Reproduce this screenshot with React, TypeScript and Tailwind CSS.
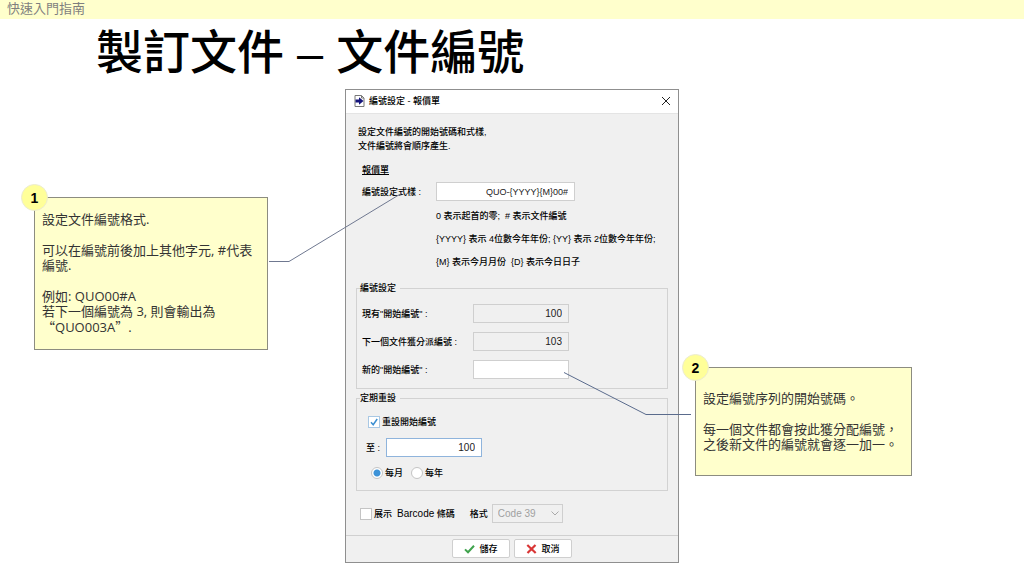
import { ReactNode } from "react";

const fieldStyle = "h-[19px] border px-1.5 text-right text-[#222] outline-none";

function Callout({
  number,
  className,
  children,
}: {
  number: number;
  className: string;
  children: ReactNode;
}) {
  return (
    <aside
      className={`relative w-full self-start border border-[#8c8c80] bg-[#ffffcc] pl-[7px] font-['Open_Sans','Noto_Sans_CJK_TC',sans-serif] text-[13px] leading-[15px] text-[#333] ${className}`}
    >
      <span className="absolute -top-3.5 -left-3.5 flex size-[27px] items-center justify-center rounded-full border border-[#ececd0] bg-[#ffff99] font-['Liberation_Sans',sans-serif] text-sm font-bold text-black">
        {number}
      </span>
      <div className="flex flex-col gap-4 whitespace-nowrap">{children}</div>
    </aside>
  );
}

function CheckBox({ id, checked }: { id: string; checked?: boolean }) {
  return (
    <span className="grid size-3 shrink-0 place-items-center">
      <input
        id={id}
        type="checkbox"
        defaultChecked={checked}
        className="peer col-start-1 row-start-1 size-3 appearance-none border border-[#c4c4c4] bg-white checked:border-[#a9c8e4]"
      />
      <svg
        viewBox="0 0 12 12"
        className="pointer-events-none invisible col-start-1 row-start-1 size-3 peer-checked:visible"
      >
        <path d="M3 6.2 5.2 8.8 9.2 3" fill="none" stroke="#3d8fd1" strokeWidth="1.5" />
      </svg>
    </span>
  );
}

function Radio({ label, checked }: { label: string; checked?: boolean }) {
  return (
    <label className="flex items-center gap-0.5">
      <input
        type="radio"
        name="periodo"
        defaultChecked={checked}
        className="size-3 appearance-none rounded-full border border-[#c4c4c4] bg-white checked:bg-[radial-gradient(circle,#3d93d8_0,#3d93d8_3px,#fff_4px)]"
      />
      {label}
    </label>
  );
}

function NumberRow({
  id,
  label,
  value,
  readOnly,
}: {
  id: string;
  label: string;
  value: string;
  readOnly?: boolean;
}) {
  return (
    <div className="flex items-center">
      <label htmlFor={id} className="w-[111px]">
        {label}
      </label>
      <input
        id={id}
        type="text"
        defaultValue={value}
        readOnly={readOnly}
        className={`${fieldStyle} w-24 border-[#cfcfcf] text-[10px] ${readOnly ? "bg-[#f0f0f0]" : "bg-white"}`}
      />
    </div>
  );
}

function NumberingDialog() {
  return (
    <section className="border border-[#8f8f8f] bg-[#f0f0f0] font-['Liberation_Sans','Noto_Sans_CJK_TC',sans-serif] text-[9px] leading-[14px] font-medium whitespace-nowrap text-black">
      <header className="flex h-[23px] items-center bg-white pr-[7px] pb-0.5 pl-2">
        <svg viewBox="0 0 11 12" className="h-3 w-[11px]">
          <path d="M1 .5h6.5L10 3v8.5H1z" fill="#fff" stroke="#777" />
          <path d="M7.5.5V3H10" fill="none" stroke="#777" />
          <path d="M1.5 4.5h3.5V2.2L9.5 6 5 9.8V7.5H1.5z" fill="#15157c" />
        </svg>
        <h2 className="ml-1 flex-1">編號設定 - 報價單</h2>
        <button type="button" aria-label="關閉">
          <svg viewBox="0 0 10 10" className="size-2.5">
            <path d="M1 1 9 9M9 1 1 9" stroke="#222" />
          </svg>
        </button>
      </header>

      <form className="border-t border-[#e4e4e4] px-2.5 pt-[11px] pb-3">
        <p className="pl-0.5">
          設定文件編號的開始號碼和式樣,
          <br />
          文件編號將會順序產生.
        </p>
        <h3 className="mt-2.5 pl-1.5 underline">報價單</h3>

        <div className="mt-[5px] flex items-center pl-1.5">
          <label htmlFor="formato" className="w-[74px]">
            編號設定式樣 :
          </label>
          <input
            id="formato"
            type="text"
            defaultValue="QUO-{YYYY}{M}00#"
            className={`${fieldStyle} w-[139px] border-[#cfcfcf] bg-white text-[9px]`}
          />
        </div>
        <div className="mt-2 flex flex-col gap-[9px] pl-20">
          <p>0 表示起首的零; &nbsp;# 表示文件編號</p>
          <p>{"{YYYY} 表示 4位數今年年份; {YY} 表示 2位數今年年份;"}</p>
          <p>
            {"{M} 表示今月月份"} &nbsp;{"{D} 表示今日日子"}
          </p>
        </div>

        <fieldset className="mt-3 border border-[#d2d2d2] px-[5px] pb-[9px]">
          <legend className="-ml-0.5 pr-1">編號設定</legend>
          <div className="flex flex-col gap-[9px] pt-[9px]">
            <NumberRow id="atual" label={'現有"開始編號" :'} value="100" readOnly />
            <NumberRow id="proximo" label="下一個文件獲分派編號 :" value="103" readOnly />
            <NumberRow id="novo" label={'新的"開始編號" :'} value="" />
          </div>
        </fieldset>

        <fieldset className="mt-0.5 border border-[#d2d2d2] px-[5px] pb-2.5">
          <legend className="-ml-0.5 pr-1">定期重設</legend>
          <div className="flex flex-col gap-[9px] pt-2.5">
            <div className="flex items-center gap-0.5 pl-1.5">
              <CheckBox id="reiniciar" checked />
              <label htmlFor="reiniciar">重設開始編號</label>
            </div>
            <div className="flex items-center pl-1">
              <label htmlFor="ate" className="w-5">
                至 :
              </label>
              <input
                id="ate"
                type="text"
                defaultValue="100"
                className={`${fieldStyle} w-24 border-[#8fb4dc] bg-white text-[10px]`}
              />
            </div>
            <div className="flex gap-2 pl-[9px]">
              <Radio label="每月" checked />
              <Radio label="每年" />
            </div>
          </div>
        </fieldset>

        <div className="mt-[13px] flex items-center pl-1">
          <CheckBox id="barcode" />
          <label htmlFor="barcode" className="ml-0.5">
            展示 &nbsp;<span className="text-[10px]">Barcode</span> 條碼
          </label>
          <label htmlFor="tipo" className="ml-[15px]">
            格式
          </label>
          <div className="ml-1 grid items-center">
            <select
              id="tipo"
              disabled
              className="col-start-1 row-start-1 h-[19px] w-[71px] appearance-none border border-[#cfcfcf] bg-[#f0f0f0] pl-[5px] text-[10px] text-[#a0a0a0]"
            >
              <option>Code 39</option>
            </select>
            <svg
              viewBox="0 0 8 5"
              className="pointer-events-none col-start-1 row-start-1 mr-1 h-[5px] w-2 justify-self-end"
            >
              <path d="M.5.5 4 4 7.5.5" fill="none" stroke="#aaa" />
            </svg>
          </div>
        </div>
      </form>

      <footer className="flex justify-center gap-1 border-t border-[#d0d0d0] pt-[3px] pb-1">
        <button
          type="button"
          className="flex h-[19px] w-[58px] items-center justify-center gap-1 rounded-xs border border-[#cfcfcf] bg-white"
        >
          <svg viewBox="0 0 11 10" className="h-2.5 w-[11px]">
            <path d="M1 5.4 4 8.3 10 1.8" fill="none" stroke="#3fa34d" strokeWidth="2" />
          </svg>
          儲存
        </button>
        <button
          type="button"
          className="flex h-[19px] w-[58px] items-center justify-center gap-1 rounded-xs border border-[#cfcfcf] bg-white"
        >
          <svg viewBox="0 0 11 10" className="h-2.5 w-[11px]">
            <path d="M1.3 1 9.7 9M9.5 1 1.5 9" stroke="#d93636" strokeWidth="2.2" />
          </svg>
          取消
        </button>
      </footer>
    </section>
  );
}

export function GuiaNumeracao() {
  return (
    <div className="min-h-screen bg-white" lang="zh-Hant">
      <div className="h-[19px] bg-[#ffffcc] pl-[7px] font-['Noto_Sans_CJK_TC',sans-serif] text-[13px] leading-[16px] text-[#7f7f7f]">
        快速入門指南
      </div>
      <h1 className="h-[70px] pl-24 font-['Liberation_Sans','Noto_Sans_CJK_TC',sans-serif] text-[47px] leading-[68px] font-medium text-black">
        製訂文件 – 文件編號
      </h1>

      <main className="grid grid-cols-[1fr_334px_1fr]">
        <div className="flex justify-end pr-[77px]">
          <Callout number={1} className="mt-[108px] max-w-[234px] py-3.5">
            <p>設定文件編號格式.</p>
            <p>
              可以在編號前後加上其他字元, #代表
              <br />
              編號.
            </p>
            <p>
              例如: QUO00#A
              <br />
              若下一個編號為 3, 則會輸出為
              <br />
              <span className="font-['Noto_Sans_CJK_TC',sans-serif]">“</span>QUO003A
              <span className="font-['Noto_Sans_CJK_TC',sans-serif]">”</span>.
            </p>
            <svg
              viewBox="0 0 135 70"
              className="pointer-events-none absolute -top-1.5 left-full z-10 h-[70px] w-[135px]"
            >
              <path d="M2 69.5H22L135 1" fill="none" stroke="#6f7890" />
            </svg>
          </Callout>
        </div>

        <NumberingDialog />

        <div className="flex pl-4">
          <Callout number={2} className="mt-[278px] max-w-[217px] py-[23px]">
            <p>設定編號序列的開始號碼。</p>
            <p>
              每一個文件都會按此獲分配編號，
              <br />
              之後新文件的編號就會逐一加一。
            </p>
            <svg
              viewBox="0 0 132 44"
              className="pointer-events-none absolute top-1 right-full z-10 h-11 w-[132px]"
            >
              <path d="M0 .5 82 42.5H127" fill="none" stroke="#5a6b8c" />
            </svg>
          </Callout>
        </div>
      </main>
    </div>
  );
}

export default GuiaNumeracao;
